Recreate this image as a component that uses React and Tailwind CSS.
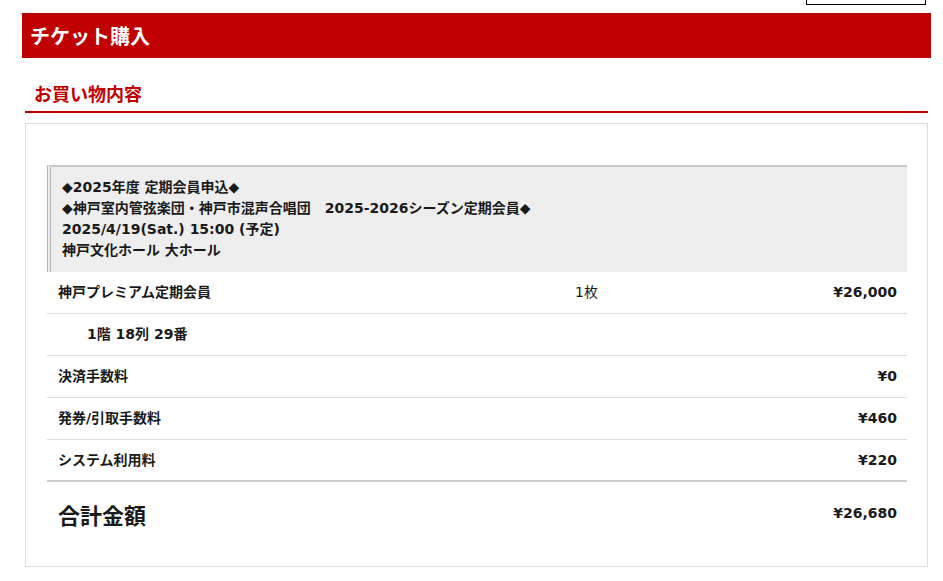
export default function App() {
    const font = { fontFamily: '"DejaVu Sans", "Noto Sans CJK JP", sans-serif' };

    const rows = [
        { name: '神戸プレミアム定期会員', qty: '1枚', price: '¥26,000' },
        { name: '1階 18列 29番', indent: true },
        { name: '決済手数料', price: '¥0' },
        { name: '発券/引取手数料', price: '¥460' },
        { name: 'システム利用料', price: '¥220', last: true },
    ];

    return (
        <div
            className="h-[581px] w-full overflow-hidden bg-white pl-[22px] pr-[12px] text-[14px] text-[#1a1a1a]"
            style={font}
        >
            {/* cut-off button at the top */}
            <div className="flex h-[5px] justify-end pr-[5px]">
                <div className="h-[5px] w-[120px] border border-t-0 border-black" />
            </div>

            {/* Header */}
            <div className="mt-[8px] flex h-[45px] items-center bg-[#c00000] pl-[8px]">
                <h1 className="text-[20px] font-bold text-white [font-family:'Noto_Sans_CJK_JP',sans-serif]">
                    チケット購入
                </h1>
            </div>

            <div className="mx-[3px]">
                {/* Section title */}
                <div className="border-b-2 border-[#c00000] pb-[6px] pl-[9px] pt-[23px]">
                    <h2 className="text-[18px] font-bold leading-[24px] text-[#c00000] [font-family:'Noto_Sans_CJK_JP',sans-serif]">
                        お買い物内容
                    </h2>
                </div>

                {/* Card */}
                <div className="mt-[10px] border border-[#dddddd] pb-[21px] pl-[21px] pr-[20px] pt-[41px]">
                    <div className="border-l-[4px] border-t-2 border-l-[#b5b5b5] border-t-[#c8c8c8] bg-[#eeeeee] pb-[11px] pl-[11px] pt-[10px] font-bold leading-[21px] [border-left-style:double]">
                        <p>◆2025年度 定期会員申込◆</p>
                        <p>◆神戸室内管弦楽団・神戸市混声合唱団　2025-2026シーズン定期会員◆</p>
                        <p>2025/4/19(Sat.) 15:00 (予定)</p>
                        <p>神戸文化ホール 大ホール</p>
                    </div>

                    {rows.map((r, i) => (
                        <div
                            key={i}
                            className={
                                'flex h-[42px] items-center pl-[11px] pr-[10px] font-bold ' +
                                (r.last ? 'border-b-2 border-[#cccccc]' : 'border-b border-[#dddddd]')
                            }
                        >
                            <div className={'w-[517px] ' + (r.indent ? 'pl-[29px]' : '')}>{r.name}</div>
                            <div className="w-[150px] font-normal">{r.qty}</div>
                            <div className="flex-1 text-right">{r.price}</div>
                        </div>
                    ))}

                    {/* Total */}
                    <div className="flex h-[63px] items-center pl-[11px] pr-[10px]">
                        <div className="flex-1 text-[22px] font-bold leading-[28px] [font-family:'Noto_Sans_CJK_JP',sans-serif]">
                            合計金額
                        </div>
                        <div className="font-bold">¥26,680</div>
                    </div>
                </div>
            </div>
        </div>
    );
}
